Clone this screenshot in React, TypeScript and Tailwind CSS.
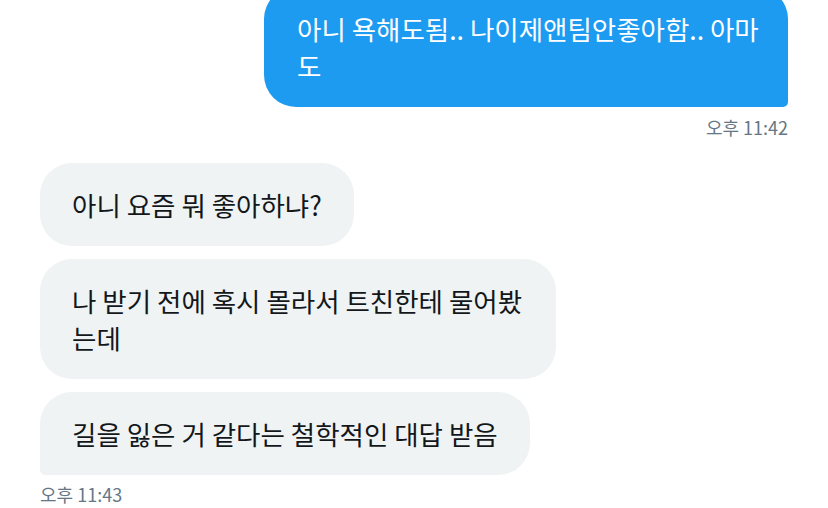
import React from "react";

type Msg = { text: string; mine: boolean };

const mine: Msg[] = [{ text: "아니 욕해도됨.. 나이제앤팀안좋아함.. 아마도", mine: true }];

const theirs: Msg[] = [
  { text: "아니 요즘 뭐 좋아하냐?", mine: false },
  { text: "나 받기 전에 혹시 몰라서 트친한테 물어봤는데", mine: false },
  { text: "길을 잃은 거 같다는 철학적인 대답 받음", mine: false },
];

export default function App() {
  return (
    <div
      className="w-[828px] h-[508px] overflow-hidden bg-white px-10"
      style={{ fontFamily: '"Noto Sans CJK KR", "Noto Sans", sans-serif' }}
    >
      {/* sent */}
      <div className="flex flex-col items-end -mt-[13px]">
        {mine.map((m, i) => (
          <div
            key={i}
            className="max-w-[524px] rounded-[32px] rounded-br-[5px] bg-[#1d9bf0] pl-[33px] pr-[22px] py-[23px] text-[26.5px] leading-[37px] text-white"
          >
            {m.text}
          </div>
        ))}
        <div className="mt-[10px] text-[18px] leading-[20px] text-[#657786]">오후 11:42</div>
      </div>

      {/* received */}
      <div className="mt-[26px] flex flex-col items-start gap-[13px]">
        {theirs.map((m, i) => (
          <div
            key={i}
            className={
              i === theirs.length - 1
                ? "max-w-[516px] rounded-[32px] rounded-bl-[5px] bg-[#eff3f4] px-8 py-[23px] text-[26.5px] leading-[37px] text-[#14171a]"
                : "max-w-[516px] rounded-[32px] bg-[#eff3f4] px-8 py-[23px] text-[26.5px] leading-[37px] text-[#14171a]"
            }
          >
            {m.text}
          </div>
        ))}
      </div>
      <div className="mt-[9px] text-[18px] leading-[20px] text-[#657786]">오후 11:43</div>
    </div>
  );
}
